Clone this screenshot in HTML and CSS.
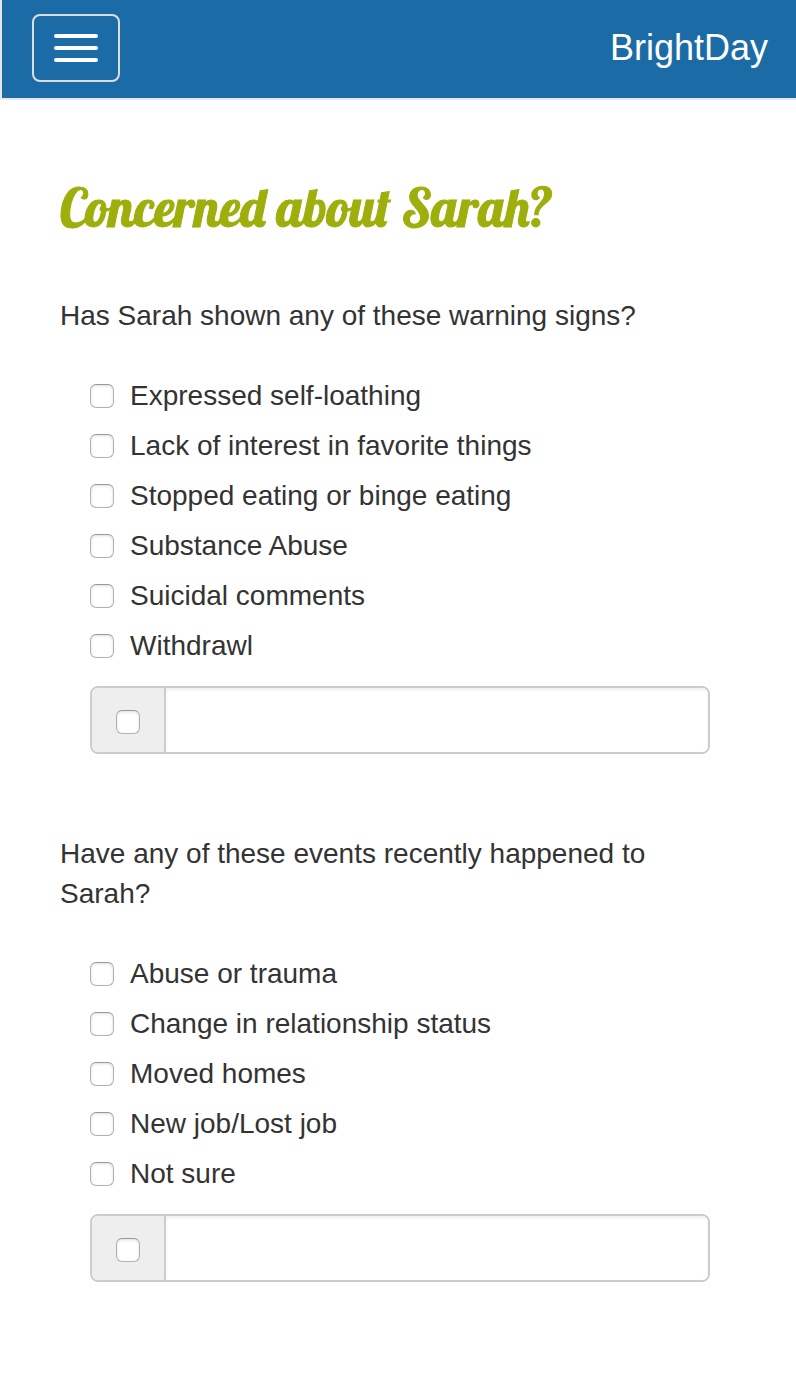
FILE: index.html
```html
<!DOCTYPE html>
<html lang="en">
<head>
<meta charset="utf-8">
<meta name="viewport" content="width=device-width, initial-scale=1">
<title>BrightDay</title>
<link rel="stylesheet" href="styles.css">
</head>
<body>
<header class="navbar">
  <button class="menu-toggle" type="button" aria-label="Toggle navigation">
    <span class="bar"></span>
    <span class="bar"></span>
    <span class="bar"></span>
  </button>
  <a class="brand" href="#">BrightDay</a>
</header>
<main class="content">
  <h1 class="title">Concerned about Sarah?</h1>
  <form class="survey">
    <fieldset class="question">
      <legend class="prompt">Has Sarah shown any of these warning signs?</legend>
      <div class="options">
        <label class="option"><input class="check" type="checkbox">Expressed self-loathing</label>
        <label class="option"><input class="check" type="checkbox">Lack of interest in favorite things</label>
        <label class="option"><input class="check" type="checkbox">Stopped eating or binge eating</label>
        <label class="option"><input class="check" type="checkbox">Substance Abuse</label>
        <label class="option"><input class="check" type="checkbox">Suicidal comments</label>
        <label class="option"><input class="check" type="checkbox">Withdrawl</label>
        <div class="other">
          <span class="addon"><input class="check" type="checkbox" aria-label="Other warning sign"></span>
          <input class="other-text" type="text" aria-label="Describe the other warning sign">
        </div>
      </div>
    </fieldset>
    <fieldset class="question">
      <legend class="prompt">Have any of these events recently happened to Sarah?</legend>
      <div class="options">
        <label class="option"><input class="check" type="checkbox">Abuse or trauma</label>
        <label class="option"><input class="check" type="checkbox">Change in relationship status</label>
        <label class="option"><input class="check" type="checkbox">Moved homes</label>
        <label class="option"><input class="check" type="checkbox">New job/Lost job</label>
        <label class="option"><input class="check" type="checkbox">Not sure</label>
        <div class="other">
          <span class="addon"><input class="check" type="checkbox" aria-label="Other event"></span>
          <input class="other-text" type="text" aria-label="Describe the other event">
        </div>
      </div>
    </fieldset>
  </form>
</main>
</body>
</html>
```

FILE: styles.css
```css
* {
  box-sizing: border-box;
}

body {
  margin: 0;
  background: #fff;
  color: #333;
  font-family: "Helvetica Neue", Helvetica, "Liberation Sans", Arial, sans-serif;
  font-size: 28px;
  line-height: 40px;
}

.navbar {
  display: flex;
  align-items: center;
  justify-content: space-between;
  padding: 14px 28px 16px 30px;
  background: #1b6ca6;
  background-clip: padding-box;
  border-left: 2px solid #e7e7e7;
  border-bottom: 2px solid #e7e7e7;
}

.menu-toggle {
  display: flex;
  flex-direction: column;
  gap: 8px;
  padding: 18px 20px;
  background: transparent;
  border: 2px solid #ddd;
  border-radius: 8px;
}

.bar {
  width: 44px;
  height: 4px;
  border-radius: 2px;
  background: #fff;
}

.brand {
  color: #fff;
  font-size: 36px;
  text-decoration: none;
}

.content {
  padding: 78px 60px 100px;
}

.title {
  margin: 0 0 58px;
  color: #9eae0b;
  font-family: Lobster, "Liberation Serif", serif;
  font-size: 52px;
  font-weight: 500;
  line-height: 60px;
  -webkit-text-stroke: 1px #9eae0b;
}

.survey {
  display: flex;
  flex-direction: column;
  gap: 80px;
}

.question {
  min-width: 0;
  margin: 0;
  padding: 0;
  border: 0;
}

.prompt {
  padding: 0;
}

.options {
  display: flex;
  flex-direction: column;
  gap: 10px;
  padding: 40px 26px 0 30px;
}

.option {
  display: flex;
  align-items: center;
  gap: 16px;
}

.check {
  appearance: none;
  flex: none;
  width: 24px;
  height: 24px;
  margin: 0;
  background: #fff;
  border: 1px solid #b2b2b2;
  border-top-color: #999;
  border-radius: 6px;
  box-shadow: inset 0 1px 3px #ddd;
}

.check:checked {
  background: #1b6ca6;
}

.other {
  display: flex;
  height: 68px;
  margin-top: 10px;
  border: 2px solid #ccc;
  border-radius: 8px;
  overflow: hidden;
}

.addon {
  display: flex;
  align-items: center;
  padding: 4px 24px 0;
  background: #eee;
  border-right: 2px solid #ccc;
}

.other-text {
  flex: 1;
  min-width: 0;
  padding: 12px 24px;
  border: 0;
  background: #fff;
  color: #555;
  font: inherit;
  box-shadow: inset 0 2px 3px #eee;
}
```
